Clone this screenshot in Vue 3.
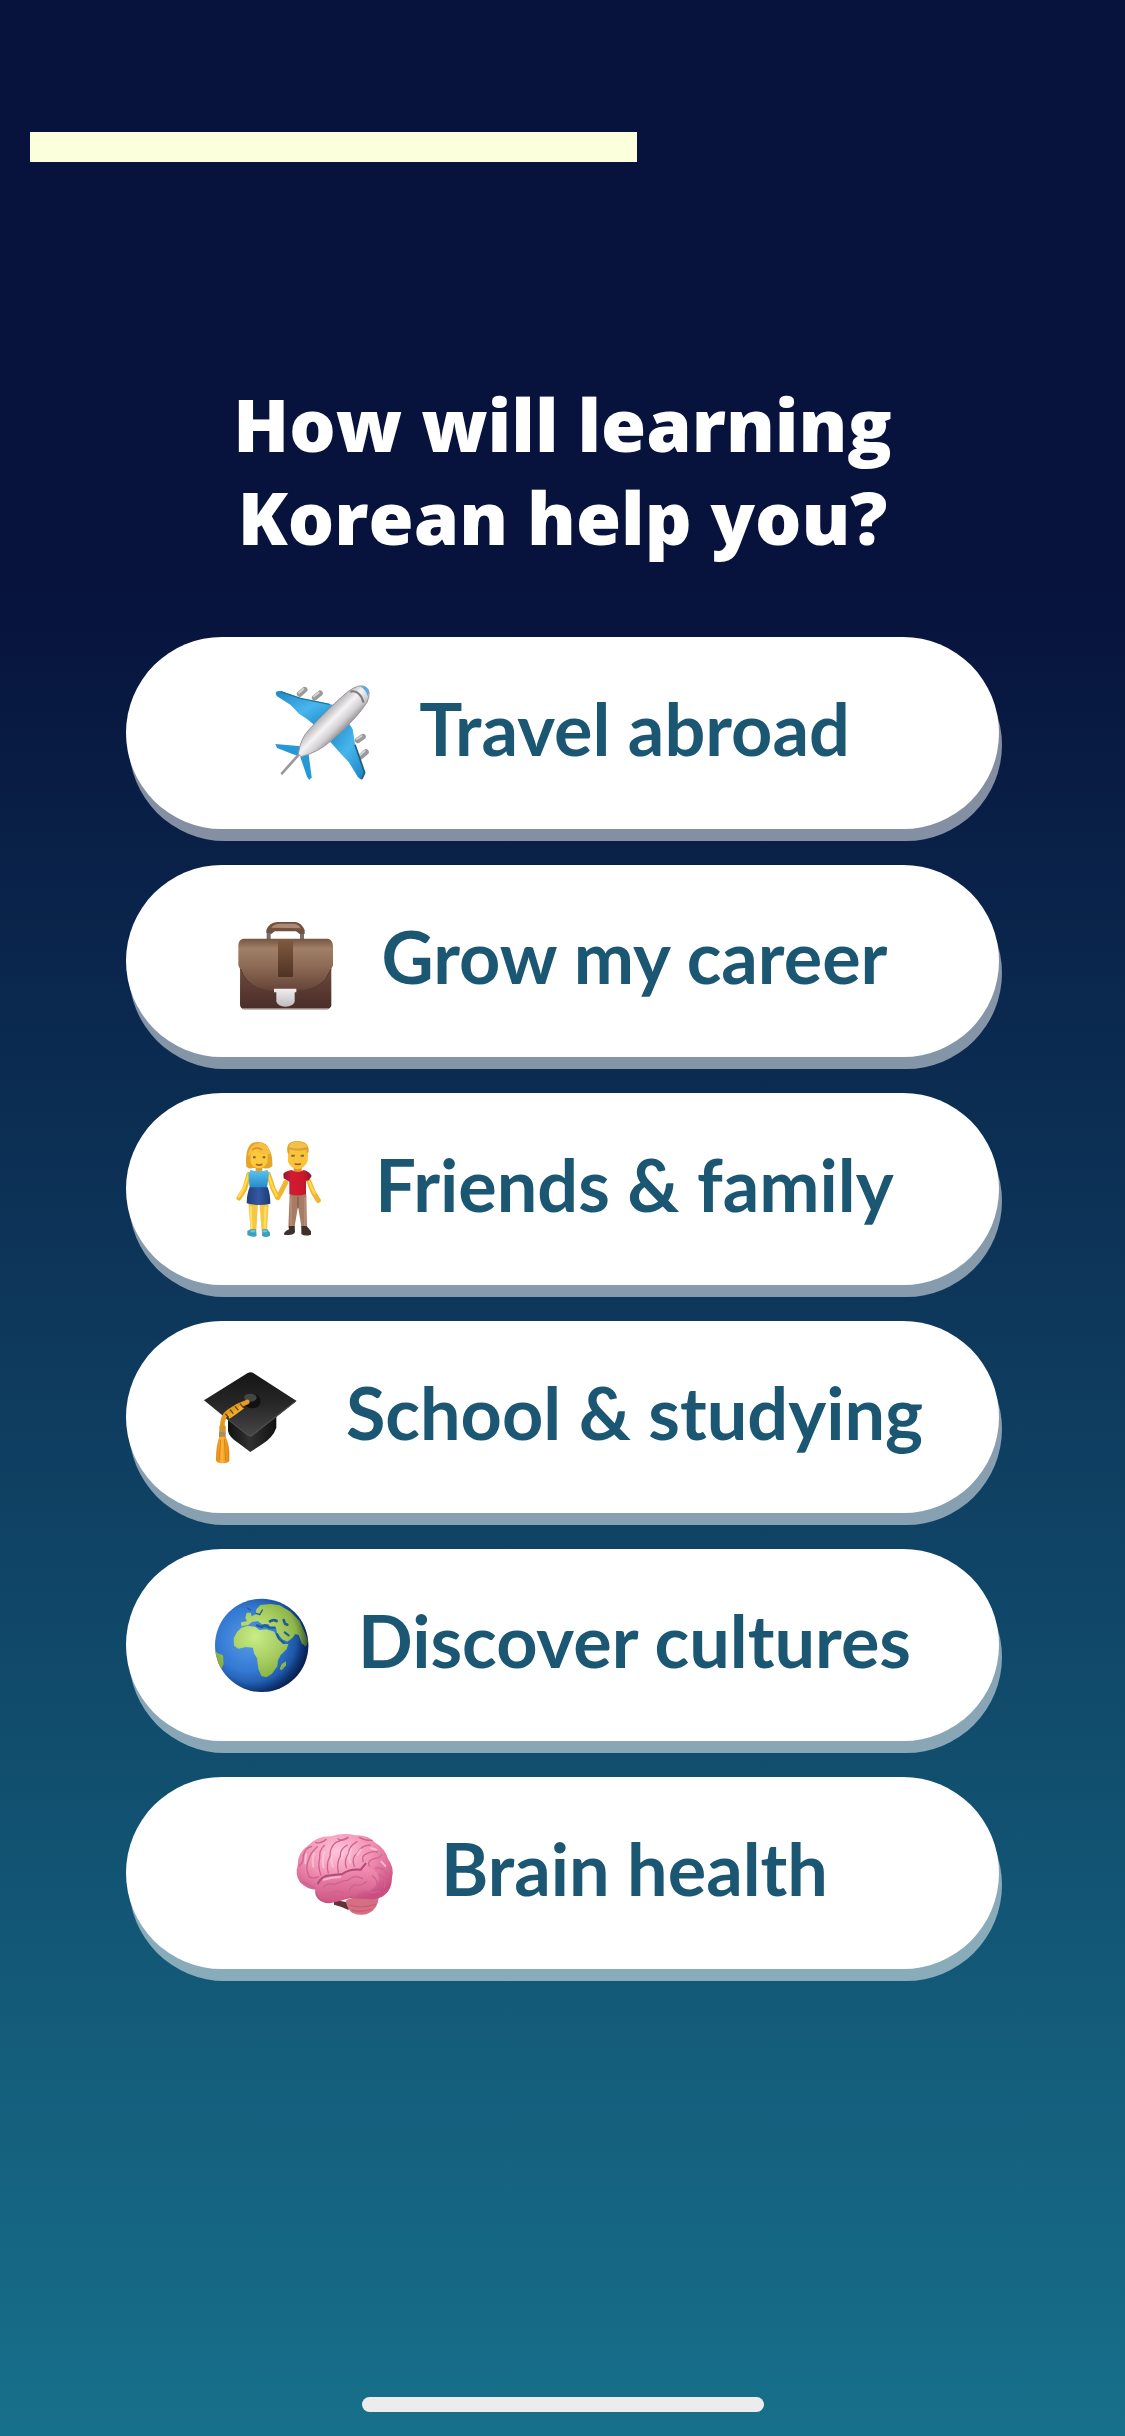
<script setup>
import { ref } from 'vue'

const progress = ref(57)
const selected = ref(null)

const options = [
  { id: 'travel', label: 'Travel abroad', viewBox: '81 75 288 288' },
  { id: 'career', label: 'Grow my career', viewBox: '75 69 288 288' },
  { id: 'friends', label: 'Friends & family', viewBox: '72 78 288 288' },
  { id: 'school', label: 'School & studying', viewBox: '69 72 288 288' },
  { id: 'cultures', label: 'Discover cultures', viewBox: '78 66 288 288' },
  { id: 'brain', label: 'Brain health', viewBox: '82 60 288 288' },
]
</script>

<template>
  <main class="screen">
    <div
      class="progress"
      role="progressbar"
      aria-label="Progress"
      :aria-valuenow="progress"
      aria-valuemin="0"
      aria-valuemax="100"
    >
      <div class="bar" :style="{ width: progress + '%' }"></div>
    </div>

    <h1 class="title">How will learning<br />Korean help you?</h1>

    <div class="options">
      <button
        v-for="option in options"
        :key="option.id"
        type="button"
        class="option"
        @click="selected = option.id"
      >
        <svg class="icon" :viewBox="option.viewBox" aria-hidden="true">
          <!-- airplane -->
          <g v-if="option.id === 'travel'">
            <defs>
              <linearGradient id="hull" x1="0.28" y1="0.3" x2="0.7" y2="0.72">
                <stop offset="0.2" stop-color="#b5b3b5" />
                <stop offset="0.45" stop-color="#f4f2f3" />
                <stop offset="0.65" stop-color="#d2d0d2" />
                <stop offset="0.9" stop-color="#77757a" />
              </linearGradient>
              <linearGradient id="wing" x1="0" y1="0" x2="1" y2="1">
                <stop offset="0" stop-color="#1c87c4" />
                <stop offset="0.5" stop-color="#48b6ee" />
                <stop offset="1" stop-color="#1780bd" />
              </linearGradient>
            </defs>
            <g stroke="#9b9999" stroke-width="17" stroke-linecap="round">
              <path d="M155 102 L170 89 M200 113 L216 100 M329 241 L345 230 M338 290 L354 276" />
            </g>
            <g stroke="#d4d2d2" stroke-width="6" stroke-linecap="round">
              <path d="M153 98 L166 87 M198 109 L212 98 M327 237 L341 228 M336 285 L350 273" />
            </g>
            <path d="M83 98 Q86 91 101 94 L158 115 L255 134 L270 160 L205 200 L176 176 L153 161 L128 135 L86 108 Z" fill="url(#wing)" />
            <path d="M300 185 L314 207 L321 252 L350 337 Q350 352 340 359 L330 352 L302 306 L284 287 L245 244 Z" fill="url(#wing)" />
            <path d="M98 95 L158 115 L245 133" fill="none" stroke="#21739f" stroke-width="4" />
            <path d="M321 254 L350 338 L341 357" fill="none" stroke="#235d7c" stroke-width="5" />
            <path d="M82 252 L160 259 L151 288 L133 282 L87 264 Z" fill="#2499d5" />
            <path d="M157 291 L182 283 L191 352 L184 360 L177 350 Z" fill="#2499d5" />
            <path d="M102 340 L153 283" stroke="#9b9899" stroke-width="8" stroke-linecap="round" />
            <path d="M151 282 Q157 237 182 210 Q250 136 301 94 Q332 71 352 80 Q372 94 357 127 Q326 177 246 245 Q211 276 159 290 Z" fill="url(#hull)" stroke="#99969a" stroke-width="3" />
            <path d="M337 79 Q358 76 364 96 L359 108 Q353 90 337 79 Z" fill="#58aee2" />
            <path d="M307 95 Q322 91 333 102 Q344 112 346 128" fill="none" stroke="#7d7b80" stroke-width="6" />
          </g>

          <!-- briefcase -->
          <g v-else-if="option.id === 'career'">
            <defs>
              <linearGradient id="leather" x1="0" y1="0" x2="0" y2="1">
                <stop offset="0" stop-color="#755442" />
                <stop offset="0.14" stop-color="#a18067" />
                <stop offset="0.4" stop-color="#8b6954" />
                <stop offset="0.72" stop-color="#67463a" />
                <stop offset="1" stop-color="#4b2e29" />
              </linearGradient>
              <linearGradient id="strap" x1="0" y1="0" x2="0" y2="1">
                <stop offset="0" stop-color="#805b40" />
                <stop offset="1" stop-color="#4f3324" />
              </linearGradient>
              <linearGradient id="clasp" x1="0" y1="0" x2="0" y2="1">
                <stop offset="0" stop-color="#f0eeee" />
                <stop offset="1" stop-color="#bfbcbd" />
              </linearGradient>
            </defs>
            <path d="M167 148 V130 M267 148 V130" stroke="#756e6c" stroke-width="12" />
            <path d="M160 130 V120 Q169 98 192 96 H247 Q265 98 275 120 V132 H260 L249 124 H185 L175 132 Z" fill="#725142" />
            <path d="M174 113 Q184 101 200 101 H245 Q259 105 263 115 Z" fill="#ad8974" />
            <path d="M91 146 H344 Q360 149 360 169 V226 L355 237 V348 Q351 357 343 358 H93 Q82 355 81 345 V237 L76 226 V167 Q76 149 91 146 Z" fill="url(#leather)" />
            <path d="M83 237 Q95 277 137 295 Q165 304 186 304 H250 Q305 302 337 269 L354 237 V348 Q350 355 342 355 H93 Q84 352 83 344 Z" fill="#4c2d29" opacity="0.45" />
            <path d="M83 237 Q95 277 137 295 Q165 304 186 304 M250 304 Q305 302 337 269 L354 237" fill="none" stroke="#583a30" stroke-width="3" />
            <rect x="195" y="147" width="45" height="114" rx="3" fill="url(#strap)" />
            <path d="M183 296 H250 V307 H245 V335 Q240 349 217 350 Q195 348 190 335 V307 H183 Z" fill="url(#clasp)" />
            <path d="M88 356 H346" stroke="#9a8582" stroke-width="4" />
          </g>

          <!-- woman and man holding hands -->
          <g v-else-if="option.id === 'friends'">
            <defs>
              <linearGradient id="dress" x1="0" y1="0" x2="0" y2="1">
                <stop offset="0" stop-color="#5bc5ef" />
                <stop offset="1" stop-color="#2489ca" />
              </linearGradient>
              <linearGradient id="shirt" x1="0" y1="0" x2="1" y2="0">
                <stop offset="0" stop-color="#8f1730" />
                <stop offset="0.3" stop-color="#d31b31" />
                <stop offset="0.7" stop-color="#cb182e" />
                <stop offset="1" stop-color="#8f1730" />
              </linearGradient>
              <linearGradient id="skirt" x1="0" y1="0" x2="1" y2="0">
                <stop offset="0" stop-color="#213e78" />
                <stop offset="0.5" stop-color="#3358a4" />
                <stop offset="1" stop-color="#203b72" />
              </linearGradient>
            </defs>
            <g fill="none" stroke="#f1b62d" stroke-width="15" stroke-linecap="round" stroke-linejoin="round">
              <path d="M126 178 L113 222 L96 249 M184 178 L198 220 L212 248 M236 203 L222 231 L212 248" />
              <path d="M306 200 L319 232 L334 256" />
            </g>
            <g fill="none" stroke="#ffda4d" stroke-width="7" stroke-linecap="round">
              <path d="M125 178 L110 221 L96 245 M184 178 L197 217 L209 242 M307 202 L322 235" />
            </g>
            <path d="M124 264 H153 L148 349 H131 Z M157 264 H185 L180 349 H164 Z" fill="#f7c743" />
            <path d="M131 274 L134 340 M176 274 L173 340" stroke="#ffe066" stroke-width="6" />
            <path d="M146 145 H166 V171 H146 Z" fill="#e5a02a" />
            <path d="M131 164 Q142 169 155 169 Q172 169 181 164 L186 175 L180 219 H128 L124 178 Z" fill="url(#dress)" />
            <path d="M128 217 H182 Q190 237 190 266 Q157 275 119 265 Q120 233 128 217 Z" fill="url(#skirt)" />
            <path d="M118 155 Q114 117 125 96 Q132 82 150 81 Q181 80 187 104 Q197 119 196 154 Q184 164 169 159 H137 Q128 164 118 155 Z" fill="#e5a52b" />
            <path d="M131 120 Q132 103 150 98 L182 112 V136 Q179 158 156 160 Q133 158 130 137 Z" fill="#fbc93a" />
            <path d="M122 122 Q134 119 144 105 Q163 122 190 116 Q188 91 163 84 Q130 82 122 122 Z" fill="#f5bf44" />
            <path d="M136 105 Q148 93 166 105" fill="none" stroke="#d68e23" stroke-width="4" />
            <path d="M138 127 H146 M167 127 H175" stroke="#865f32" stroke-width="6" />
            <path d="M147 148 Q156 153 166 148" fill="none" stroke="#b75b31" stroke-width="5" />
            <path d="M131 343 H147 L149 363 Q135 369 121 360 V348 Z M166 343 H181 L189 353 V362 Q176 370 165 362 Z" fill="#3c9fbe" />
            <path d="M131 349 H145 M168 349 H180" stroke="#73c9d8" stroke-width="6" />

            <path d="M260 151 H284 V173 H260 Z" fill="#de952d" />
            <path d="M243 110 Q236 82 264 79 Q302 76 304 100 L302 139 Q293 160 271 163 Q251 159 243 140 Z" fill="#f9c439" />
            <path d="M242 115 Q235 82 264 79 Q306 74 305 112 L299 114 V104 Q273 111 247 103 V116 Z" fill="#dfa034" />
            <path d="M245 97 Q273 105 301 95 Q295 80 268 80 Q247 81 245 97 Z" fill="#f3c14a" />
            <path d="M253 122 H263 M281 122 H291" stroke="#7c684d" stroke-width="6" />
            <path d="M263 146 Q272 150 282 146" fill="none" stroke="#a85a32" stroke-width="5" />
            <path d="M248 237 H298 L300 340 H284 L273 274 L262 340 H244 Z" fill="#a77c64" />
            <path d="M273 245 V280" stroke="#805a49" stroke-width="4" />
            <path d="M252 247 V338 M294 247 V338" stroke="#bd9279" stroke-width="4" />
            <path d="M229 177 Q232 169 254 165 Q272 177 290 165 Q308 170 314 183 L306 195 L297 198 V237 Q273 246 247 237 V200 L230 190 Z" fill="url(#shirt)" />
            <path d="M246 333 H263 L264 351 Q260 363 231 359 Q230 350 246 343 Z M283 333 H299 L312 349 V359 Q293 365 283 357 Z" fill="#3d302d" />
          </g>

          <!-- graduation cap -->
          <g v-else-if="option.id === 'school'">
            <defs>
              <linearGradient id="board" x1="0" y1="0" x2="0" y2="1">
                <stop offset="0" stop-color="#151515" />
                <stop offset="0.5" stop-color="#272727" />
                <stop offset="1" stop-color="#494848" />
              </linearGradient>
              <linearGradient id="cap" x1="0" y1="0" x2="1" y2="0">
                <stop offset="0" stop-color="#111" />
                <stop offset="0.45" stop-color="#323132" />
                <stop offset="1" stop-color="#111" />
              </linearGradient>
              <linearGradient id="tassel" x1="0" y1="0" x2="1" y2="0">
                <stop offset="0" stop-color="#e38a12" />
                <stop offset="0.45" stop-color="#ffb33a" />
                <stop offset="1" stop-color="#dc850f" />
              </linearGradient>
            </defs>
            <path d="M147 219 L292 212 V248 Q282 278 246 300 L214 321 L181 296 Q149 276 147 257 Z" fill="url(#cap)" />
            <path d="M75 166 L206 84 Q215 79 224 85 L353 168 L219 274 Q212 276 205 270 L139 218 Z" fill="url(#board)" />
            <path d="M141 219 L207 271 Q213 275 220 270 L349 169" fill="none" stroke="#555354" stroke-width="3" />
            <ellipse cx="220" cy="168" rx="25" ry="22" fill="#111" />
            <ellipse cx="214" cy="158" rx="19" ry="12" fill="#464546" />
            <path d="M205 171 Q176 181 150 199 Q129 213 130 247" fill="none" stroke="#e59a20" stroke-width="14" stroke-linecap="round" />
            <path d="M191 185 Q171 200 148 216" fill="none" stroke="#f2aa2f" stroke-width="13" />
            <path d="M139 206 L149 217 M153 194 L163 206 M168 184 L178 196 M183 176 L193 188" stroke="#60430e" stroke-width="4" />
            <path d="M121 242 H140 V260 H121 Z" fill="#d4972d" />
            <path d="M120 259 H140 V276 H120 Z" fill="#a98d5a" />
            <path d="M121 275 H140 Q153 300 151 347 Q145 356 129 355 Q111 354 111 344 Q111 301 121 275 Z" fill="url(#tassel)" />
            <path d="M125 284 L120 347 M136 282 L140 347" stroke="#d78618" stroke-width="3" />
          </g>

          <!-- globe -->
          <g v-else-if="option.id === 'cultures'">
            <defs>
              <radialGradient id="ocean" cx="0.36" cy="0.44" r="0.68">
                <stop offset="0" stop-color="#559be9" />
                <stop offset="0.5" stop-color="#3479d2" />
                <stop offset="0.76" stop-color="#1b54a4" />
                <stop offset="1" stop-color="#071e5b" />
              </radialGradient>
              <radialGradient id="land" gradientUnits="userSpaceOnUse" cx="202" cy="184" r="180">
                <stop offset="0" stop-color="#c9ec86" />
                <stop offset="0.45" stop-color="#a6cc60" />
                <stop offset="0.75" stop-color="#86ad40" />
                <stop offset="1" stop-color="#4f6f24" />
              </radialGradient>
              <radialGradient id="shade" cx="0.4" cy="0.42" r="0.64">
                <stop offset="0.74" stop-color="#071d49" stop-opacity="0" />
                <stop offset="1" stop-color="#061331" stop-opacity="0.6" />
              </radialGradient>
              <clipPath id="sphere"><circle cx="221" cy="211" r="140" /></clipPath>
            </defs>
            <circle cx="221" cy="211" r="140" fill="url(#ocean)" />
            <g clip-path="url(#sphere)" fill="url(#land)">
              <path d="M137 190 L147 171 L160 158 L179 152 L203 156 L214 165 L235 163 L259 170 L267 188 L284 207 L301 207 L296 223 L278 240 L270 256 L268 274 L252 296 L235 307 L220 303 L211 281 L207 250 L198 235 L195 218 L174 216 L151 221 L138 212 Z" />
              <path d="M160 154 L159 142 L177 139 L172 128 L176 113 L188 113 L191 124 L203 118 L205 103 L217 90 L247 87 L275 91 L308 110 L335 138 L349 170 L360 198 L354 215 L341 205 L332 180 L322 177 L313 189 L298 200 L283 193 L267 173 L264 158 L247 156 L241 147 L223 148 L208 138 L192 141 L180 150 Z" />
              <path d="M275 282 L281 267 L294 259 L294 271 L281 286 Z" />
              <path d="M78 226 L90 235 L105 241 L107 266 L99 286 L78 283 Z" />
            </g>
            <g fill="none" stroke="#225d8f" stroke-linecap="round" stroke-linejoin="round">
              <path d="M207 151 L220 156 L231 151 L245 158 L260 158" stroke-width="7" />
              <path d="M246 139 Q256 132 266 138 M287 135 L291 146 L298 149" stroke-width="8" />
              <path d="M267 177 L274 192 L288 203" stroke-width="6" />
              <path d="M290 172 L302 181" stroke-width="6" />
              <path d="M204 115 L215 119 L223 105 M178 99 L188 105" stroke-width="4" />
            </g>
            <circle cx="221" cy="211" r="140" fill="url(#shade)" />
          </g>

          <!-- brain -->
          <g v-else>
            <defs>
              <radialGradient id="lobe" cx="0.43" cy="0.25" r="0.72">
                <stop offset="0" stop-color="#ffc5d9" />
                <stop offset="0.5" stop-color="#f291b2" />
                <stop offset="1" stop-color="#c94f82" />
              </radialGradient>
              <linearGradient id="temporal" x1="0" y1="0" x2="0" y2="1">
                <stop offset="0" stop-color="#f28cb0" />
                <stop offset="1" stop-color="#cf5782" />
              </linearGradient>
            </defs>
            <path d="M193 289 Q219 283 243 298 L236 315 Q212 303 193 299 Z" fill="#653036" />
            <path d="M228 287 Q249 270 327 278 Q325 310 297 325 Q274 335 247 323 Q234 314 228 287 Z" fill="#d56f81" />
            <path d="M239 300 Q270 312 319 298 M246 315 Q275 324 305 312" fill="none" stroke="#c65f75" stroke-width="4" />
            <path d="M91 232 Q75 208 84 182 Q83 143 116 121 Q144 92 184 94 Q222 81 257 91 Q295 89 317 113 Q346 130 355 161 Q375 188 367 218 Q367 253 344 271 Q324 287 290 282 L243 279 L206 289 Q165 303 145 281 Q134 269 137 254 Q112 253 91 232 Z" fill="url(#lobe)" />
            <path d="M143 240 Q154 217 183 212 L220 207 Q241 191 273 195 Q300 183 321 203 Q339 232 302 257 Q265 262 237 275 Q202 297 162 288 Q136 276 143 240 Z" fill="url(#temporal)" />
            <g fill="none" stroke="#cb6590" stroke-width="4" stroke-linecap="round" stroke-linejoin="round">
              <path d="M88 183 Q104 171 100 151 M101 153 Q107 126 126 125 M119 216 Q105 188 117 165 Q122 142 143 125" />
              <path d="M154 211 Q143 183 150 161 Q148 134 165 121 M176 204 Q168 177 181 154 Q180 127 199 112 L235 97" />
              <path d="M206 203 Q200 172 212 154 Q211 132 233 120 M230 188 Q222 163 237 145 Q237 124 262 110" />
              <path d="M254 184 Q243 157 264 144 Q273 121 302 120" />
              <path d="M281 170 Q274 153 291 146 Q310 137 323 141 M299 183 Q291 165 317 160 Q330 160 335 149" />
              <path d="M318 189 Q342 187 350 207 M329 208 Q354 224 344 248 M309 213 Q327 228 320 244 L305 256" />
              <path d="M162 246 Q178 231 194 239 Q218 226 235 226 Q254 207 278 221 M179 264 Q205 253 219 263 M241 271 Q234 250 255 239 Q276 245 291 229" />
              <path d="M253 274 Q280 251 307 263 L330 259 M133 248 Q120 238 97 229 M119 216 Q136 222 147 215" />
              <path d="M138 112 Q153 118 170 103 M205 101 Q216 112 235 99 M269 97 Q285 107 307 106" />
            </g>
            <path d="M145 235 Q157 211 183 211 L218 207 Q238 191 273 194 L288 176" fill="none" stroke="#b04a78" stroke-width="6" stroke-linecap="round" />
            <g fill="none" stroke="#ffc9dc" stroke-width="6" stroke-linecap="round" opacity="0.75">
              <path d="M110 148 Q106 164 107 175 M133 145 Q126 164 131 185 M164 140 Q156 166 162 187 M191 140 Q181 163 190 185" />
              <path d="M219 140 L217 160 M245 132 Q234 156 242 173 M273 134 L263 149 M303 129 L320 134 M162 224 Q187 217 212 216 M335 170 L347 183" />
            </g>
          </g>
        </svg>
        <span class="label">{{ option.label }}</span>
      </button>
    </div>

    <div class="home-indicator"></div>
  </main>
</template>

<style>
body {
  margin: 0;
}
</style>

<style scoped>
.screen {
  box-sizing: border-box;
  display: flex;
  flex-direction: column;
  min-height: 100vh;
  padding: 132px 0 24px;
  background: linear-gradient(#07133c 0%, #07133c 24%, #17708b 100%);
  font-family: Lato, 'Open Sans', sans-serif;
}

.progress {
  margin: 0 30px;
}
.bar {
  height: 30px;
  background: #fbffdc;
}

.title {
  margin: 215px 30px 74px;
  font-family: 'Open Sans', Lato, sans-serif;
  font-size: 73px;
  font-weight: 800;
  line-height: 93px;
  text-align: center;
  color: #fff;
}

.options {
  display: flex;
  flex-direction: column;
  gap: 36px;
  padding: 0 126px;
}
.option {
  display: flex;
  align-items: center;
  justify-content: center;
  gap: 48px;
  height: 192px;
  padding: 0;
  border: 0;
  border-radius: 96px;
  background: #fff;
  /* solid lip under the pill */
  box-shadow: 3px 12px 0 rgba(255, 255, 255, 0.5);
  font-family: inherit;
  font-size: 72px;
  font-weight: 700;
  color: #1b5772;
  cursor: pointer;
}
.icon {
  flex: none;
  width: 96px;
  height: 96px;
  overflow: visible;
}
.label {
  padding-bottom: 10px;
  white-space: nowrap;
}

.home-indicator {
  width: 402px;
  height: 15px;
  margin: auto auto 0;
  border-radius: 8px;
  background: #ececec;
}
</style>
